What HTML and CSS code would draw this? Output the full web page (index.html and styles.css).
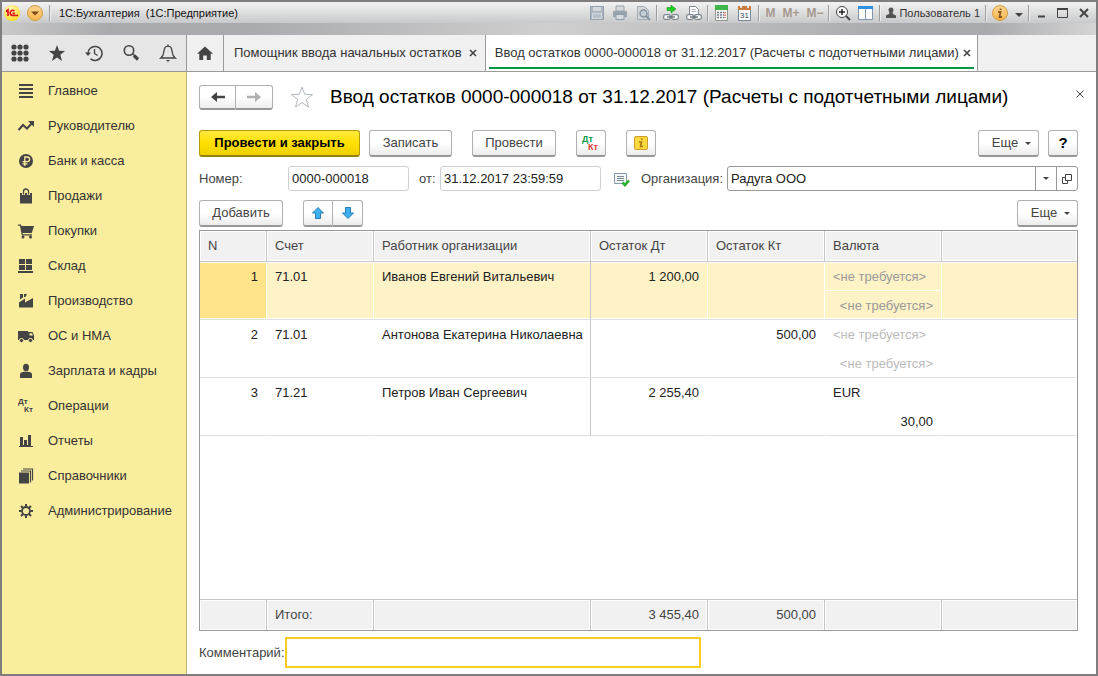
FILE: index.html
```html
<!DOCTYPE html>
<html lang="ru">
<head>
    <meta charset="UTF-8">
    <meta name="viewport" content="width=device-width, initial-scale=1.0">
    <title>1С:Бухгалтерия (1С:Предприятие)</title>
    <link rel="stylesheet" href="styles.css">
</head>
<body>
    <header class="titlebar">
        <div class="title-row">
            <svg class="logo" width="16" height="16" viewBox="0 0 16 16">
                <defs>
                    <radialGradient id="logoFill" cx="0.4" cy="0.3" r="0.7"><stop offset="0" stop-color="#fffbc0"/><stop offset="1" stop-color="#fbd926"/></radialGradient>
                    <linearGradient id="orangeFill" x1="0" y1="0" x2="0" y2="1"><stop offset="0" stop-color="#fdd795"/><stop offset="1" stop-color="#f7b548"/></linearGradient>
                </defs>
                <circle cx="8" cy="8" r="8" fill="url(#logoFill)"/>
                <path d="M2 6.500l2-1.500v6M10.500 6a2.600 2.600 0 1 0-2 4.500H14M11 8.300H8.500" fill="none" stroke="#e0121b" stroke-width="1.700"/>
            </svg>
            <button class="round-btn" aria-label="Меню">
                <svg width="16" height="16" viewBox="0 0 16 16"><circle cx="8" cy="8" r="7.500" fill="url(#orangeFill)" stroke="#d79a45"/><path d="M4 6.500h8l-4 4z" fill="#7a4a1c"/></svg>
            </button>
            <span class="sep"></span>
            <span class="app-name">1С:Бухгалтерия&nbsp; (1С:Предприятие)</span>
            <div class="tools">
                <button aria-label="Сохранить"><svg width="16" height="16" viewBox="0 0 16 16"><path d="M1 1h14v14H1z" fill="#aab5c0"/><path d="M4 1h8v5H4zM3 8h10v7H3z" fill="#d3d8dc"/><path d="M4 10h8M4 12h8" stroke="#9caab6"/><path d="M1.500 1.500h13v13h-13z" fill="none" stroke="#93a1ae"/></svg></button>
                <button aria-label="Печать"><svg width="16" height="16" viewBox="0 0 16 16"><path d="M4 1h8v5H4z" fill="#d6d9db" stroke="#9aa5ae"/><path d="M1 6h14v6H1z" fill="#98a4ae"/><path d="M4 9.500h8v5H4z" fill="#d9dcde" stroke="#8f9ca6"/></svg></button>
                <button aria-label="Просмотр"><svg width="16" height="16" viewBox="0 0 16 16"><path d="M2.500 1.500h7l4 4v9h-11z" fill="#d3d7da" stroke="#a0abb4"/><circle cx="8.500" cy="8.500" r="3.500" fill="#c4ced5" stroke="#8495a2" stroke-width="1.500"/><path d="M11 11l4 4" stroke="#8495a2" stroke-width="2"/></svg></button>
                <span class="sep"></span>
                <button aria-label="Получить ссылку"><svg width="16" height="16" viewBox="0 0 16 16"><path d="M4 2.500h4V0l5 4-5 4V5.500H4z" fill="#1fd022" stroke="#108512" stroke-width=".5"/><rect x=".7" y="9.700" width="6.600" height="4.600" rx="1.500" fill="#fff" stroke="#7c8690" stroke-width="1.300"/><rect x="8.700" y="9.700" width="6.600" height="4.600" rx="1.500" fill="#fff" stroke="#7c8690" stroke-width="1.300"/><path d="M4 12h8" stroke="#5b6670" stroke-width="1.300"/></svg></button>
                <button aria-label="Перейти по ссылке"><svg width="16" height="16" viewBox="0 0 16 16"><path d="M3.500 9V1.500h6l3 3V9" fill="#fff" stroke="#7d8791"/><path d="M5.500 4.500h4M5.500 6.500h5" stroke="#aab3bb"/><rect x=".7" y="9.700" width="6.600" height="4.600" rx="1.500" fill="#fff" stroke="#7c8690" stroke-width="1.300"/><rect x="8.700" y="9.700" width="6.600" height="4.600" rx="1.500" fill="#fff" stroke="#7c8690" stroke-width="1.300"/><path d="M4 12h8" stroke="#5b6670" stroke-width="1.300"/></svg></button>
                <span class="sep"></span>
                <button aria-label="Калькулятор"><svg width="16" height="16" viewBox="0 0 16 16"><path d="M1.500.5h12v15h-12z" fill="#f5f5f5" stroke="#8e9a8e"/><path d="M1 0h13v5H1z" fill="#3fb54a"/><path d="M3 7.500h7M3 10h7M3 12.500h7" stroke="#74808c" stroke-width="1.500" stroke-dasharray="2 1"/><path d="M11 7v6" stroke="#e06a5a" stroke-width="1.500" stroke-dasharray="1.500 1"/></svg></button>
                <button aria-label="Календарь"><svg width="16" height="16" viewBox="0 0 16 16"><path d="M1.500 1.500h12v14h-12z" fill="#fafafa" stroke="#75889a"/><path d="M1 1h13v4H1z" fill="#c77c3f"/><path d="M4 0v3M11 0v3" stroke="#fff" stroke-width="1.500"/><text x="7.500" y="13" class="cal-text">31</text></svg></button>
                <span class="sep"></span>
                <button class="mem">M</button>
                <button class="mem">M+</button>
                <button class="mem">M−</button>
                <span class="sep"></span>
                <button aria-label="Масштаб"><svg width="16" height="16" viewBox="0 0 16 16"><circle cx="7" cy="7" r="5.500" fill="#fff" stroke="#444"/><path d="M4 7h6M7 4v6" stroke="#222" stroke-width="1.500"/><path d="M11 11l4 4" stroke="#444" stroke-width="2"/></svg></button>
                <button aria-label="Панели"><svg width="16" height="16" viewBox="0 0 16 16"><path d="M.5 1.500h14v13H.5zM7.500 3v12" fill="#fff" stroke="#7f97ae"/><path d="M0 1h15v3H0z" fill="#2f8fe0"/></svg></button>
                <span class="sep"></span>
                <button class="user"><svg width="10" height="12" viewBox="0 0 10 12"><circle cx="5" cy="3" r="2.500" fill="#555"/><path d="M3.500 5h3l.5 2 3 1.500V11H0V8.500L3 7z" fill="#555"/></svg>Пользователь 1</button>
                <span class="sep"></span>
                <button aria-label="Справка"><svg width="16" height="16" viewBox="0 0 16 16"><circle cx="8" cy="8" r="7.500" fill="url(#orangeFill)" stroke="#d79a45"/><path d="M6 7h2.500L7.500 12H10M8.500 3.500v1.500" fill="none" stroke="#8b5a22" stroke-width="1.800"/></svg></button>
                <button class="small-drop" aria-label="Ещё"><svg width="8" height="8" viewBox="0 0 8 8"><path d="M0 4h8L4 8z" fill="#444"/></svg></button>
                <span class="sep"></span>
                <button aria-label="Свернуть"><svg width="14" height="14" viewBox="0 0 14 14"><path d="M3 10.500h7" stroke="#444" stroke-width="2"/></svg></button>
                <button aria-label="Развернуть"><svg width="14" height="14" viewBox="0 0 14 14"><path d="M1.500 2.500h10v9h-10z" fill="none" stroke="#444"/><path d="M1 3h11" stroke="#444" stroke-width="2"/></svg></button>
                <button aria-label="Закрыть"><svg width="14" height="14" viewBox="0 0 14 14"><path d="M3 3l8 8M11 3l-8 8" stroke="#444" stroke-width="2"/></svg></button>
            </div>
        </div>
    </header>

    <div class="topbar">
        <div class="quick">
            <button aria-label="Функции"><svg width="18" height="18" viewBox="0 0 18 18" fill="#444"><circle cx="3" cy="3" r="2.600"/><circle cx="9" cy="3" r="2.600"/><circle cx="15" cy="3" r="2.600"/><circle cx="3" cy="9" r="2.600"/><circle cx="9" cy="9" r="2.600"/><circle cx="15" cy="9" r="2.600"/><circle cx="3" cy="15" r="2.600"/><circle cx="9" cy="15" r="2.600"/><circle cx="15" cy="15" r="2.600"/></svg></button>
            <button aria-label="Избранное"><svg width="18" height="18" viewBox="0 0 18 18"><path d="M9 1l2.100 5.800 6 .2-4.800 3.700L14 17l-5-3.600L4 17l1.700-6.300L.9 7l6-.2z" fill="#444"/></svg></button>
            <button aria-label="История"><svg width="18" height="18" viewBox="0 0 18 18"><path d="M3 10A7 7 0 1 1 5.500 14.800" fill="none" stroke="#444" stroke-width="1.500"/><path d="M0 8.500h6l-3 3.500z" fill="#444"/><path d="M9.500 5v4.500l3 2" fill="none" stroke="#444" stroke-width="1.300"/></svg></button>
            <button aria-label="Поиск"><svg width="18" height="18" viewBox="0 0 18 18"><circle cx="7" cy="6.500" r="4.700" fill="none" stroke="#444" stroke-width="1.600"/><path d="M10.500 10l2 1.500" stroke="#444" stroke-width="1.500"/><path d="M12 11.500l4 4" stroke="#444" stroke-width="3.200"/></svg></button>
            <button aria-label="Оповещения"><svg width="18" height="18" viewBox="0 0 18 18"><path d="M9 2.200c-3.200 0-3.900 2.500-4.200 5.800-.3 3-1.300 4.700-3 6h14.400c-1.700-1.300-2.700-3-3-6C12.900 4.700 12.200 2.200 9 2.200z" fill="none" stroke="#444" stroke-width="1.300"/><path d="M7 16h4l-2 2zM8.300.5h1.400v2H8.300z" fill="#444"/></svg></button>
        </div>
        <nav class="tabs">
            <a href="#" class="tab home" aria-label="Начальная страница"><svg width="16" height="16" viewBox="0 0 16 16"><path d="M8 1.500l8 7.200h-2.300V15H9.800v-4.500H6.200V15H2.300V8.700H0z" fill="#444"/></svg></a>
            <div class="tab"><a href="#">Помощник ввода начальных остатков</a><button class="tab-close" aria-label="Закрыть вкладку"><svg width="8" height="8" viewBox="0 0 8 8"><path d="M1 1l6 6M7 1L1 7" stroke="#444" stroke-width="1.600"/></svg></button></div>
            <div class="tab active"><a href="#">Ввод остатков 0000-000018 от 31.12.2017 (Расчеты с подотчетными лицами)</a><button class="tab-close" aria-label="Закрыть вкладку"><svg width="8" height="8" viewBox="0 0 8 8"><path d="M1 1l6 6M7 1L1 7" stroke="#444" stroke-width="1.600"/></svg></button></div>
        </nav>
    </div>

    <div class="workspace">
        <nav class="sidebar">
            <a href="#"><svg width="16" height="16" viewBox="0 0 16 16"><path d="M1 2h14M1 6h14M1 10h14M1 14h14" stroke="#444" stroke-width="2"/></svg>Главное</a>
            <a href="#"><svg width="16" height="16" viewBox="0 0 16 16"><path d="M0.500 12L5 7l4 3.500 5-5.500" fill="none" stroke="#444" stroke-width="2"/><path d="M10 3h6v6z" fill="#444"/></svg>Руководителю</a>
            <a href="#"><svg width="16" height="16" viewBox="0 0 16 16"><circle cx="8" cy="8" r="7" fill="#444"/><path d="M6.800 13V4h2.500a2.200 2.200 0 0 1 0 4.700H4.500M4.500 10.800h5" fill="none" stroke="#fbed9e" stroke-width="1.300"/></svg>Банк и касса</a>
            <a href="#"><svg width="16" height="16" viewBox="0 0 16 16"><path d="M2 5h12v10.500H2z" fill="#444"/><path d="M5.500 7V3.500a2.500 2.500 0 0 1 5 0V7" fill="none" stroke="#fbed9e" stroke-width="3"/><path d="M5.500 6.500V3.500a2.500 2.500 0 0 1 5 0v3" fill="none" stroke="#444" stroke-width="1.300"/></svg>Продажи</a>
            <a href="#"><svg width="16" height="16" viewBox="0 0 16 16"><path d="M0 1.500h3l.5 1.500H16l-2.200 7H4.500l.3 1.200H14v1.300H3.800L2 2.800H0z" fill="#444"/><circle cx="5" cy="14" r="1.500" fill="#444"/><circle cx="12.500" cy="14" r="1.500" fill="#444"/></svg>Покупки</a>
            <a href="#"><svg width="16" height="16" viewBox="0 0 16 16"><path d="M1 1h6v5H1zM8 1h6v5H8zM1 7h6v5H1zM8 7h6v5H8zM0 13h15v2H0z" fill="#444"/></svg>Склад</a>
            <a href="#"><svg width="16" height="16" viewBox="0 0 16 16"><path d="M1 14.500V9.500l6-4v4l8-4.500v9.500zM2 1h3v3.500L2 6.500zM6 1h3l-1.500 3H6z" fill="#444"/></svg>Производство</a>
            <a href="#"><svg width="16" height="16" viewBox="0 0 16 16"><path d="M0 3h10v9H0zM10 4h4.500L16 7.500V12h-6z" fill="#444"/><path d="M11.500 5.200H14l1 2.300h-3.500z" fill="#fbed9e"/><g fill="#444" stroke="#fbed9e"><circle cx="3.500" cy="12.500" r="2.100"/><circle cx="12.500" cy="12.500" r="2.100"/></g></svg>ОС и НМА</a>
            <a href="#"><svg width="16" height="16" viewBox="0 0 16 16"><ellipse cx="8" cy="4.500" rx="3" ry="3.700" fill="#444"/><path d="M2 15v-3.500C2 9.500 4 9 6 8.800h4c2 .2 4 .7 4 2.700V15z" fill="#444"/></svg>Зарплата и кадры</a>
            <a href="#"><svg width="16" height="16" viewBox="0 0 16 16"><text x="0" y="6" class="dtkt">Дт</text><text x="6" y="14" class="dtkt">Кт</text></svg>Операции</a>
            <a href="#"><svg width="16" height="16" viewBox="0 0 16 16"><path d="M2 4h3v8h1V7h3v5h1V2h3v11h2v1H1v-1h1z" fill="#444"/></svg>Отчеты</a>
            <a href="#"><svg width="16" height="16" viewBox="0 0 16 16"><path d="M1 4.500h10v11H1z" fill="#444"/><path d="M3 3h9.500v11.500M5 1h9.500v11.500" fill="none" stroke="#444" stroke-width="1.200"/></svg>Справочники</a>
            <a href="#"><svg width="16" height="16" viewBox="0 0 16 16"><circle cx="8" cy="8" r="4" fill="none" stroke="#444" stroke-width="1.800"/><g stroke="#444" stroke-width="2"><path d="M8 1v2.500M8 12.500V15M1 8h2.500M12.500 8H15M3 3l2 2M11 11l2 2M13 3l-2 2M5 11l-2 2"/></g></svg>Администрирование</a>
        </nav>

        <main class="form">
            <div class="heading">
                <div class="btn-group">
                    <button class="btn nav-btn" aria-label="Назад"><svg width="14" height="12" viewBox="0 0 14 12"><path d="M0 6l6-5v3.700h8v2.600H6V11z" fill="#444"/></svg></button>
                    <button class="btn nav-btn" aria-label="Вперед"><svg width="14" height="12" viewBox="0 0 14 12"><path d="M14 6L8 1v3.700H0v2.600h8V11z" fill="#b0b0b0"/></svg></button>
                </div>
                <button class="star" aria-label="В избранное"><svg width="24" height="24" viewBox="0 0 24 24"><path d="M12 2l2.700 7.300 7.800.3-6.200 4.800L18.500 22 12 17.600 5.500 22l2.200-7.600L1.500 9.600l7.800-.3z" fill="#fff" stroke="#b4b9c0"/></svg></button>
                <h1>Ввод остатков 0000-000018 от 31.12.2017 (Расчеты с подотчетными лицами)</h1>
                <button class="form-close" aria-label="Закрыть"><svg width="8" height="8" viewBox="0 0 8 8"><path d="M.5.5l7 7M7.500.5l-7 7" stroke="#444"/></svg></button>
            </div>

            <div class="commands">
                <button class="btn primary">Провести и закрыть</button>
                <button class="btn write">Записать</button>
                <button class="btn post">Провести</button>
                <button class="btn square" aria-label="Дт Кт"><svg width="18" height="18" viewBox="0 0 18 18"><text x="0" y="8" class="dt">Дт</text><text x="6" y="16" class="kt">Кт</text></svg></button>
                <button class="btn square" aria-label="Информация"><svg width="14" height="14" viewBox="0 0 14 14"><rect x=".5" y=".5" width="13" height="13" rx="1.500" fill="#fcd93e" stroke="#cf9d2b"/><path d="M5 6h2.500l-1 4.500H9M7.700 2.500V4" fill="none" stroke="#a87510" stroke-width="1.600"/></svg></button>
                <button class="btn more">Еще<span class="caret"></span></button>
                <button class="btn help">?</button>
            </div>

            <div class="fields">
                <label class="number-label" for="number">Номер:</label>
                <input class="field short" id="number" type="text" value="0000-000018">
                <label class="date-label" for="date">от:</label>
                <input class="field date" id="date" type="text" value="31.12.2017 23:59:59">
                <svg class="status" width="16" height="16" viewBox="0 0 16 16"><path d="M.5 2.500h12v10H.5z" fill="#f3f6f9" stroke="#8a99a8"/><path d="M3 5.500h7M3 7.500h7M3 9.500h7" stroke="#7a8896"/><path d="M8.500 11.500l2.500 2.500 4-4.500" fill="none" stroke="#28b030" stroke-width="2.600"/></svg>
                <label class="org-label" for="org">Организация:</label>
                <div class="combo">
                    <input id="org" type="text" value="Радуга ООО">
                    <button aria-label="Выбрать"><span class="caret"></span></button>
                    <button aria-label="Открыть"><svg width="10" height="10" viewBox="0 0 10 10"><path d="M3.500.5h6v6h-6zM3 3.500H.5v6h5V7" fill="none" stroke="#444"/></svg></button>
                </div>
            </div>

            <div class="table-commands">
                <button class="btn add">Добавить</button>
                <div class="btn-group">
                    <button class="btn arrow" aria-label="Вверх"><svg width="12" height="12" viewBox="0 0 12 12"><path d="M6 .5l5.500 5.500h-3v5.500h-5V6h-3z" fill="#3fb0ee" stroke="#2a7db0"/></svg></button>
                    <button class="btn arrow" aria-label="Вниз"><svg width="12" height="12" viewBox="0 0 12 12"><path d="M6 11.500L.5 6h3V.5h5V6h3z" fill="#3fb0ee" stroke="#2a7db0"/></svg></button>
                </div>
                <button class="btn more">Еще<span class="caret"></span></button>
            </div>

            <div class="grid-box">
                <table class="grid">
                    <colgroup>
                        <col class="col-n"><col class="col-account"><col class="col-person"><col class="col-sum"><col class="col-sum"><col class="col-sum"><col>
                    </colgroup>
                    <thead>
                        <tr><th>N</th><th>Счет</th><th>Работник организации</th><th>Остаток Дт</th><th>Остаток Кт</th><th>Валюта</th><th></th></tr>
                    </thead>
                    <tbody>
                        <tr class="selected">
                            <td class="num current">1</td><td>71.01</td><td class="fixed">Иванов Евгений Витальевич</td><td class="num">1 200,00</td><td></td>
                            <td class="double"><div class="muted">&lt;не требуется&gt;</div><div class="muted num">&lt;не требуется&gt;</div></td><td></td>
                        </tr>
                        <tr>
                            <td class="num">2</td><td>71.01</td><td class="fixed">Антонова Екатерина Николаевна</td><td></td><td class="num">500,00</td>
                            <td class="double"><div class="muted">&lt;не требуется&gt;</div><div class="muted num">&lt;не требуется&gt;</div></td><td></td>
                        </tr>
                        <tr>
                            <td class="num">3</td><td>71.21</td><td class="fixed">Петров Иван Сергеевич</td><td class="num">2 255,40</td><td></td>
                            <td class="double"><div>EUR</div><div class="num">30,00</div></td><td></td>
                        </tr>
                        <tr class="filler"><td colspan="7"></td></tr>
                    </tbody>
                    <tfoot>
                        <tr><td></td><td>Итого:</td><td></td><td class="num">3 455,40</td><td class="num">500,00</td><td></td><td></td></tr>
                    </tfoot>
                </table>
            </div>

            <div class="comment">
                <label for="comment">Комментарий:</label>
                <input id="comment" type="text">
            </div>
        </main>
    </div>
</body>
</html>
```

FILE: styles.css
```css
* {
    box-sizing: border-box;
}
body {
    display: flex;
    flex-direction: column;
    height: 100vh;
    margin: 0;
    border: 2px solid #7f7d7e;
    background: #fff;
    color: #333;
    font-family: "Liberation Sans", Arial, sans-serif;
    font-size: 13px;
    line-height: 16px;
}
button, input {
    font: inherit;
    color: inherit;
}
button {
    padding: 0;
    border: 0;
    background: none;
}
a {
    color: inherit;
    text-decoration: none;
}
svg {
    display: block;
    flex: none;
}

/* title bar */
.titlebar {
    flex: none;
    height: 33px;
    background: linear-gradient(90deg, #c9c9c9, #a9aaad 10%, #a9aaad 22%, #cfcfcf 50%, #a9aaad 82%, #a9aaad 90%, #d5d5d5);
}
.title-row {
    display: flex;
    align-items: center;
    height: 21px;
    padding: 0 5px 0 2px;
    background: linear-gradient(#f2f2f2, #c8c9ca);
}
.round-btn {
    margin: 0 6px 0 7px;
}
.sep {
    width: 1px;
    height: 16px;
    background: #9c9c9c;
    border-right: 1px solid #eee;
    box-sizing: content-box;
}
.app-name {
    margin-left: 8px;
    color: #111;
    font-size: 11px;
}
.tools {
    display: flex;
    align-items: center;
    gap: 7px;
    margin-left: auto;
}
.tools .sep {
    margin: 0 -2px;
}
.tools .mem {
    color: #a99a90;
    font-size: 12px;
    font-weight: bold;
}
.user {
    display: flex;
    align-items: center;
    gap: 3px;
    font-size: 11px;
}
.cal-text {
    font-size: 8px;
    text-anchor: middle;
    fill: #34495e;
}

/* tabs */
.topbar {
    display: flex;
    flex: none;
    height: 37px;
    border-bottom: 1px solid #9a9a9a;
    background: #f0f0f0;
}
.quick {
    display: flex;
    align-items: center;
    justify-content: space-between;
    width: 185px;
    padding: 0 9px;
    border-right: 1px solid #9a9a9a;
    background: #e6e6e6;
}
.tabs {
    display: flex;
}
.tab {
    display: flex;
    align-items: center;
    gap: 7px;
    padding: 0 8px 0 10px;
    border-right: 1px solid #9a9a9a;
}
.tab.home {
    padding: 0 10px;
}
.tab.active {
    gap: 4px;
    padding: 0 6px 0 9px;
    background: linear-gradient(#009646, #009646) 3px 32px / calc(100% - 6px) 2px no-repeat #fff;
}

/* sections */
.workspace {
    display: flex;
    flex: 1;
    min-height: 0;
}
.sidebar {
    flex: none;
    width: 185px;
    padding-top: 1px;
    border-right: 1px solid #bdb272;
    background: #fbed9e;
}
.sidebar a {
    display: flex;
    align-items: center;
    gap: 14px;
    height: 35px;
    padding-left: 16px;
}
.dtkt {
    font-size: 8px;
    font-weight: bold;
    fill: #444;
}

/* document form */
.form {
    display: flex;
    flex: 1;
    flex-direction: column;
    min-width: 0;
    padding: 12px 18px 6px 12px;
}
.btn {
    display: flex;
    align-items: center;
    justify-content: center;
    height: 27px;
    border: 1px solid #b0b0b0;
    border-bottom: 2px solid #979797;
    border-radius: 3px;
    background: linear-gradient(#fff 50%, #ececec);
    color: #444;
}
.btn-group {
    display: flex;
}
.btn-group .btn:first-child {
    border-radius: 3px 0 0 3px;
}
.btn-group .btn:last-child {
    border-left: 0;
    border-radius: 0 3px 3px 0;
}
.caret {
    border: 3px solid transparent;
    border-top-color: #444;
    border-bottom: 0;
}
.heading {
    display: flex;
    align-items: center;
    height: 26px;
}
.nav-btn {
    width: 37px;
    height: 25px;
}
.star {
    margin: 0 16px 0 17px;
}
h1 {
    margin: 0;
    color: #000;
    font-size: 19px;
    font-weight: normal;
    line-height: 26px;
    white-space: nowrap;
}
.form-close {
    align-self: flex-start;
    margin: 6px -6px 0 auto;
}
.commands {
    display: flex;
    margin-top: 20px;
}
.primary {
    width: 161px;
    border-color: #b59a00 #b59a00 #94820f;
    background: linear-gradient(#ffe940, #ffe000 50%, #f0cf00);
    color: #000;
    font-weight: bold;
}
.write {
    width: 83px;
    margin-left: 9px;
}
.post {
    width: 84px;
    margin: 0 20px;
}
.square {
    width: 30px;
    margin-right: 20px;
}
.dt, .kt {
    font-size: 9px;
    font-weight: bold;
    fill: #0a9648;
}
.kt {
    fill: #e0393c;
}
.more {
    gap: 7px;
    width: 61px;
    margin-left: auto;
    padding-left: 6px;
}
.help {
    width: 30px;
    margin-left: 9px;
    color: #000;
    font-size: 15px;
    font-weight: bold;
}
.fields {
    display: flex;
    align-items: center;
    margin-top: 9px;
    color: #444;
}
.number-label {
    width: 89px;
}
.field {
    width: 121px;
    height: 25px;
    padding: 0 3px;
    border: 1px solid #d0d0d0;
    border-radius: 3px;
    color: #222;
}
.field.date {
    width: 161px;
}
.date-label {
    width: 31px;
    padding-left: 10px;
}
.status {
    margin: 0 11px 0 13px;
}
.org-label {
    width: 86px;
}
.combo {
    display: flex;
    flex: 1;
    height: 25px;
    border: 1px solid #999;
    border-radius: 3px;
}
.combo input {
    flex: 1;
    min-width: 0;
    padding: 0 3px;
    border: 0;
    background: none;
    color: #222;
}
.combo button {
    display: flex;
    align-items: center;
    justify-content: center;
    width: 21px;
    border-left: 1px solid #999;
}
.table-commands {
    display: flex;
    margin: 9px 0 3px;
}
.add {
    width: 84px;
    margin-right: 20px;
}
.arrow {
    width: 30px;
}

/* balances table */
.grid-box {
    flex: 1;
    min-height: 0;
    border: 1px solid #9a9a9a;
}
.grid {
    width: 100%;
    height: 100%;
    border-collapse: separate;
    border-spacing: 0;
    table-layout: fixed;
}
.col-n {
    width: 67px;
}
.col-account {
    width: 107px;
}
.col-person {
    width: 217px;
}
.col-sum {
    width: 117px;
}
.grid th, .grid td {
    padding: 0 8px;
    text-align: left;
    vertical-align: top;
    font-weight: normal;
    white-space: nowrap;
}
.grid th, .grid tfoot td {
    height: 31px;
    border-right: 1px solid #c6c6c6;
    border-bottom: 1px solid #c6c6c6;
    background: #f1f1f1;
    box-shadow: inset 0 0 0 1px #fff;
    color: #444;
    vertical-align: middle;
}
.grid tfoot td {
    border-top: 1px solid #c6c6c6;
    border-bottom: 0;
}
.grid th:last-child, .grid tfoot td:last-child {
    border-right: 0;
}
.grid tbody td {
    height: 58px;
    padding-top: 7px;
    border-right: 1px solid transparent;
    border-bottom: 1px solid #e0e0e0;
    color: #222;
}
.grid tbody .fixed {
    border-right-color: #c6c6c6;
}
.grid .selected td {
    border-right-color: #fff;
    background: #fef2c7;
    background-clip: padding-box;
    box-shadow: inset 0 1px #fff, inset 0 -1px #fff;
}
.grid .selected .fixed {
    border-right-color: #c6c6c6;
}
.grid .selected .current {
    background-color: #ffe48c;
}
.grid .selected td:last-child {
    border-right: 0;
}
.grid tbody .double {
    padding: 0;
}
.double div {
    height: 28px;
    padding: 7px 8px 0;
}
.double div + div {
    height: 29px;
    border-top: 1px solid transparent;
}
.selected .double div + div {
    border-color: #fff;
}
.grid .num {
    text-align: right;
}
.muted {
    color: #bbb;
}
.selected .muted {
    color: #999;
}
.grid .filler td {
    height: auto;
    border: 0;
}
.comment {
    display: flex;
    align-items: center;
    margin-top: 6px;
    color: #444;
}
.comment label {
    width: 86px;
}
.comment input {
    width: 416px;
    height: 31px;
    border: 2px solid #fbcd1e;
    outline: 0;
}
```
